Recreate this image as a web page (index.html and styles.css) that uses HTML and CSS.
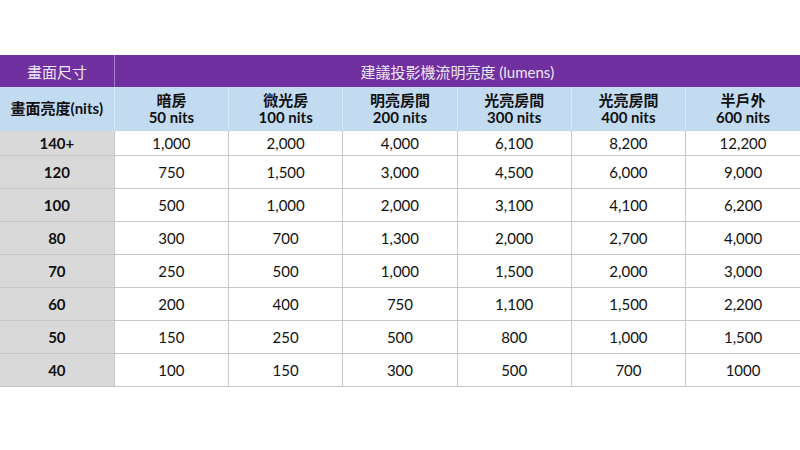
FILE: index.html
```html
<!DOCTYPE html>
<html lang="zh-Hant">
<head>
<meta charset="utf-8">
<title>投影機亮度建議</title>
<link rel="stylesheet" href="styles.css">
</head>
<body>
<table class="grid">
  <colgroup>
    <col class="c"><col class="c"><col class="c"><col class="c"><col class="c"><col class="c"><col class="c">
  </colgroup>
  <thead>
    <tr class="top">
      <th class="top-left">畫面尺寸</th>
      <th colspan="6" class="top-span">建議投影機流明亮度 (lumens)</th>
    </tr>
    <tr class="sub">
      <th class="sub-left">畫面亮度(nits)</th>
      <th>暗房<br>50 nits</th>
      <th>微光房<br>100 nits</th>
      <th>明亮房間<br>200 nits</th>
      <th>光亮房間<br>300 nits</th>
      <th>光亮房間<br>400 nits</th>
      <th>半戶外<br>600 nits</th>
    </tr>
  </thead>
  <tbody>
    <tr class="first"><th>140+</th><td>1,000</td><td>2,000</td><td>4,000</td><td>6,100</td><td>8,200</td><td>12,200</td></tr>
    <tr><th>120</th><td>750</td><td>1,500</td><td>3,000</td><td>4,500</td><td>6,000</td><td>9,000</td></tr>
    <tr><th>100</th><td>500</td><td>1,000</td><td>2,000</td><td>3,100</td><td>4,100</td><td>6,200</td></tr>
    <tr><th>80</th><td>300</td><td>700</td><td>1,300</td><td>2,000</td><td>2,700</td><td>4,000</td></tr>
    <tr><th>70</th><td>250</td><td>500</td><td>1,000</td><td>1,500</td><td>2,000</td><td>3,000</td></tr>
    <tr><th>60</th><td>200</td><td>400</td><td>750</td><td>1,100</td><td>1,500</td><td>2,200</td></tr>
    <tr><th>50</th><td>150</td><td>250</td><td>500</td><td>800</td><td>1,000</td><td>1,500</td></tr>
    <tr><th>40</th><td>100</td><td>150</td><td>300</td><td>500</td><td>700</td><td>1000</td></tr>
  </tbody>
</table>
</body>
</html>
```
FILE: styles.css
```css
html, body {
  margin: 0;
  padding: 0;
  background: #ffffff;
}
body {
  padding-top: 55px;
  font-family: "Lato", "Noto Sans CJK TC", sans-serif;
  color: #111111;
}
.grid {
  width: 800px;
  border-collapse: collapse;
  table-layout: fixed;
  font-size: 15px;
}
.grid .c {
  width: 114.28px;
}
.grid th, .grid td {
  padding: 0;
  text-align: center;
  vertical-align: middle;
}
.top th {
  height: 32px;
  background: #7030a0;
  color: #eee8f3;
  font-weight: normal;
  font-size: 15px;
}
.top .top-left {
  border-right: 1px solid #a77fc6;
}
.sub th {
  height: 43px;
  background: #c3dbf0;
  font-weight: bold;
  line-height: 17px;
  border-left: 1px solid #dce9f6;
  border-bottom: 1px solid #c3dbf0;
}
.sub .sub-left {
  border-left: none;
  font-size: 15px;
}
tbody th, tbody td {
  height: 32px;
  border-top: 1px solid #c8c8c8;
  border-left: 1px solid #c8c8c8;
}
tbody tr.first th, tbody tr.first td {
  height: 24px;
  border-top: none;
}
tbody tr:last-child th, tbody tr:last-child td {
  border-bottom: 1px solid #c8c8c8;
}
tbody th {
  background: #d9d9d9;
  font-weight: bold;
  border-left: none;
}
tbody td {
  font-weight: normal;
}
```
